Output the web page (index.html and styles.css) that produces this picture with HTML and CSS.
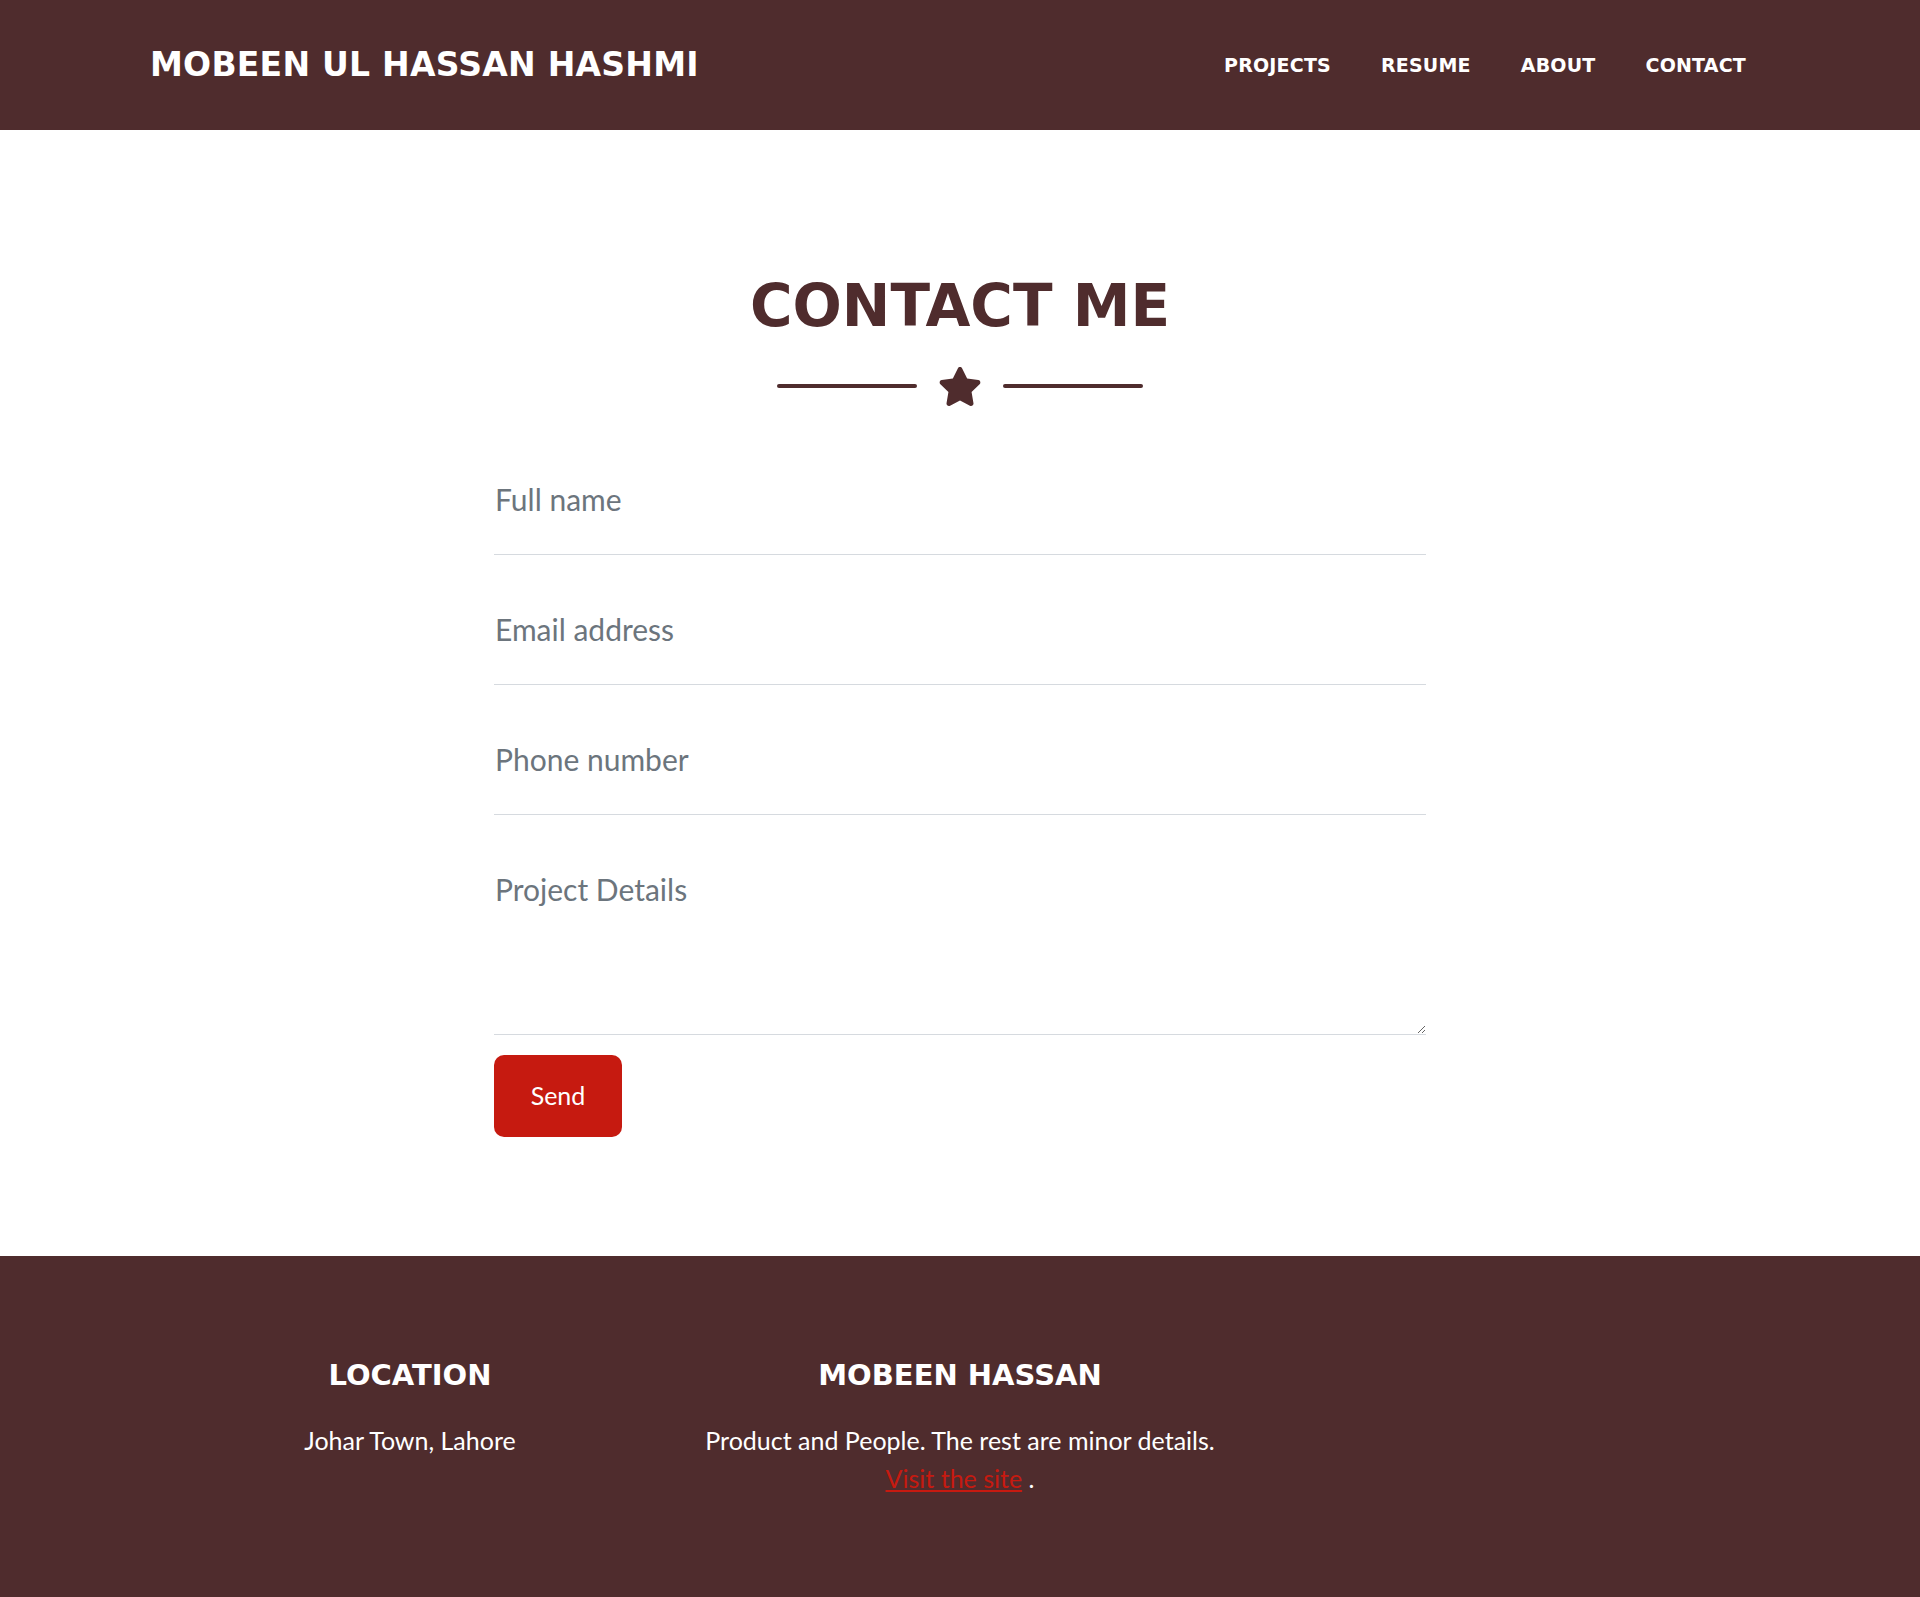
FILE: index.html
```html
<!DOCTYPE html>
<html lang="en">
<head>
<meta charset="utf-8">
<title>Contact - Mobeen Ul Hassan Hashmi</title>
<link rel="stylesheet" href="styles.css">
</head>
<body>
<nav class="navbar">
  <div class="container nav-inner">
    <a class="brand" href="#">MOBEEN UL HASSAN HASHMI</a>
    <ul class="nav-links">
      <li><a href="#">PROJECTS</a></li>
      <li><a href="#">RESUME</a></li>
      <li><a href="#">ABOUT</a></li>
      <li><a href="#">CONTACT</a></li>
    </ul>
  </div>
</nav>

<section class="contact">
  <h2 class="section-heading">CONTACT ME</h2>
  <div class="divider">
    <span class="divider-line"></span>
    <svg class="divider-star" viewBox="12 0 552 512" width="42" height="39" aria-hidden="true"><path d="M259.3 17.8L194 150.2 47.9 171.5c-26.2 3.8-36.7 36.1-17.7 54.6l105.7 103-25 145.5c-4.5 26.3 23.2 46 46.4 33.7L288 439.6l130.7 68.7c23.2 12.2 50.9-7.4 46.4-33.7l-25-145.5 105.7-103c19-18.5 8.5-50.8-17.7-54.6L382 150.2 316.7 17.8c-11.7-23.6-45.6-23.9-57.4 0z"/></svg>
    <span class="divider-line"></span>
  </div>
  <form class="contact-form">
    <input class="field" type="text" placeholder="Full name">
    <input class="field" type="email" placeholder="Email address">
    <input class="field" type="tel" placeholder="Phone number">
    <textarea class="field field-area" placeholder="Project Details"></textarea>
    <button class="btn-send" type="button">Send</button>
  </form>
</section>

<footer class="footer">
  <div class="footer-row">
    <div class="footer-col">
      <h4 class="footer-title">LOCATION</h4>
      <p class="footer-text">Johar Town, Lahore</p>
    </div>
    <div class="footer-col">
      <h4 class="footer-title">MOBEEN HASSAN</h4>
      <p class="footer-text">Product and People. The rest are minor details.<br><a class="footer-link" href="#">Visit the site</a> .</p>
    </div>
    <div class="footer-col"></div>
  </div>
</footer>
</body>
</html>
```

FILE: styles.css
```css
* { box-sizing: border-box; }

html, body {
  margin: 0;
  padding: 0;
}

body {
  font-family: Lato, "Liberation Sans", sans-serif;
  background: #ffffff;
  color: #212529;
}

.container {
  width: 1620px;
  margin: 0 auto;
}

/* Navbar */
.navbar {
  background: #4f2c2d;
  height: 130px;
  display: flex;
  align-items: center;
}

.nav-inner {
  display: flex;
  align-items: center;
  justify-content: space-between;
}

.brand {
  font-family: "DejaVu Sans", sans-serif;
  font-weight: 700;
  font-size: 33px;
  letter-spacing: 0.25px;
  line-height: 1.2;
  color: #ffffff;
  text-decoration: none;
}

.nav-links {
  list-style: none;
  margin: 0;
  padding: 0;
  display: flex;
}

.nav-links a {
  display: block;
  padding: 0 25px;
  font-family: "DejaVu Sans", sans-serif;
  font-weight: 700;
  font-size: 19px;
  letter-spacing: 0.2px;
  line-height: 1.2;
  color: #ffffff;
  text-decoration: none;
}

.nav-links li:last-child a {
  padding-right: 24px;
}

/* Contact section */
.contact {
  padding: 142px 0 119px;
}

.section-heading {
  margin: 0;
  text-align: center;
  font-family: "DejaVu Sans", sans-serif;
  font-weight: 700;
  font-size: 58px;
  line-height: 1.2;
  color: #4f2c2d;
}

.divider {
  margin-top: 25px;
  height: 39px;
  display: flex;
  justify-content: center;
  align-items: center;
  gap: 22px;
}

.divider-line {
  width: 140px;
  height: 4px;
  border-radius: 4px;
  background: #4f2c2d;
}

.divider-star {
  display: block;
  fill: #4f2c2d;
}

.contact-form {
  width: 932px;
  margin: 19px auto 0;
  display: flex;
  flex-direction: column;
  align-items: flex-start;
}

.field {
  display: block;
  width: 100%;
  height: 130px;
  margin: 0;
  padding: 56px 1px 37px;
  border: 0;
  border-bottom: 1px solid #d6dadf;
  border-radius: 0;
  background: transparent;
  font-family: Lato, sans-serif;
  font-size: 30px;
  line-height: 36px;
  color: #212529;
  outline: none;
}

.field::placeholder {
  color: #6c757d;
  opacity: 1;
}

.field-area {
  height: 220px;
  padding-bottom: 10px;
  resize: vertical;
}

.btn-send {
  margin-top: 20px;
  width: 128px;
  height: 82px;
  border: 0;
  border-radius: 10px;
  background: #c61a10;
  color: #ffffff;
  font-family: Lato, sans-serif;
  font-size: 25px;
  line-height: 1.5;
  padding: 0;
  cursor: pointer;
}

/* Footer */
.footer {
  background: #4f2c2d;
  color: #ffffff;
  padding: 102px 0 100px;
}

.footer-row {
  width: 1650px;
  margin: 0 auto;
  display: flex;
}

.footer-col {
  flex: 1 1 0;
  text-align: center;
}

.footer-title {
  margin: 0 0 30px;
  font-family: "DejaVu Sans", sans-serif;
  font-weight: 700;
  font-size: 29px;
  line-height: 1.2;
}

.footer-text {
  margin: 0;
  font-family: Lato, sans-serif;
  font-size: 25px;
  line-height: 1.5;
}

.footer-link {
  color: #c61a10;
  text-decoration: underline;
}
```
